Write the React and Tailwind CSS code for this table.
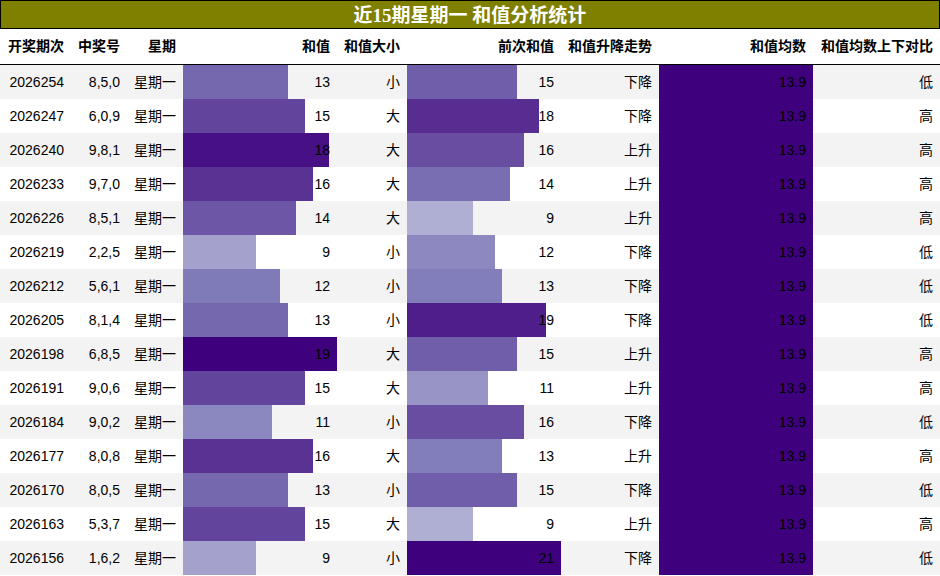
import React from 'react';

// --- Data ---
const rows = [
  ['2026254', '8,5,0', 13, '小', 15, '下降', '低'],
  ['2026247', '6,0,9', 15, '大', 18, '下降', '高'],
  ['2026240', '9,8,1', 18, '大', 16, '上升', '高'],
  ['2026233', '9,7,0', 16, '大', 14, '上升', '高'],
  ['2026226', '8,5,1', 14, '大', 9, '上升', '高'],
  ['2026219', '2,2,5', 9, '小', 12, '下降', '低'],
  ['2026212', '5,6,1', 12, '小', 13, '下降', '低'],
  ['2026205', '8,1,4', 13, '小', 19, '下降', '低'],
  ['2026198', '6,8,5', 19, '大', 15, '上升', '高'],
  ['2026191', '9,0,6', 15, '大', 11, '上升', '高'],
  ['2026184', '9,0,2', 11, '小', 16, '下降', '低'],
  ['2026177', '8,0,8', 16, '大', 13, '上升', '高'],
  ['2026170', '8,0,5', 13, '小', 15, '下降', '低'],
  ['2026163', '5,3,7', 15, '大', 9, '上升', '高'],
  ['2026156', '1,6,2', 9, '小', 21, '下降', '低'],
];

const AVG = 13.9;

// Purples colour scale (colorbrewer 9 steps)
const PURPLES = [
  [252, 251, 253], [239, 237, 245], [218, 218, 235], [188, 189, 220],
  [158, 154, 200], [128, 125, 186], [106, 81, 163], [84, 39, 143], [63, 0, 125],
];

const purple = (t) => {
  const x = Math.max(0, Math.min(1, t)) * (PURPLES.length - 1);
  const i = Math.min(Math.floor(x), PURPLES.length - 2);
  const f = x - i;
  const c = PURPLES[i].map((v, k) => Math.round(v + (PURPLES[i + 1][k] - v) * f));
  return `rgb(${c[0]},${c[1]},${c[2]})`;
};

// --- Bar cell: bar width and colour taken from the value ---
const BarCell = ({ value, max, label }) => (
  <div className="relative w-[154px] h-full">
    <div
      className="absolute left-0 top-0 h-full"
      style={{ width: `${(value / max) * 100}%`, backgroundColor: purple(value / max) }}
    />
    <div className="relative h-full flex items-center justify-end pr-[7px]">{label ?? value}</div>
  </div>
);

const maxSum = Math.max(...rows.map((r) => r[2]));
const maxPrev = Math.max(...rows.map((r) => r[4]));

export default function App() {
  return (
    <div
      className="w-[940px] h-[576px] bg-white overflow-hidden text-[14px] text-black"
      style={{ fontFamily: '"Liberation Sans", "Noto Sans CJK SC", sans-serif' }}
    >
      {/* Title */}
      <div className="h-[29px] bg-[#808000] border border-black flex items-center justify-center">
        <span
          className="text-white font-bold text-[19px] leading-none pt-[1px]"
          style={{ fontFamily: '"Liberation Serif", "Noto Sans CJK SC", serif' }}
        >
          近15期星期一 和值分析统计
        </span>
      </div>

      {/* Header */}
      <div className="h-[36px] flex font-bold border-b border-black">
        <div className="w-[71px] flex items-center justify-end pr-[7px]">开奖期次</div>
        <div className="w-[56px] flex items-center justify-end pr-[7px]">中奖号</div>
        <div className="w-[56px] flex items-center justify-end pr-[7px]">星期</div>
        <div className="w-[154px] flex items-center justify-end pr-[7px]">和值</div>
        <div className="w-[70px] flex items-center justify-end pr-[7px]">和值大小</div>
        <div className="w-[154px] flex items-center justify-end pr-[7px]">前次和值</div>
        <div className="w-[98px] flex items-center justify-end pr-[7px]">和值升降走势</div>
        <div className="w-[154px] flex items-center justify-end pr-[7px]">和值均数</div>
        <div className="w-[127px] flex items-center justify-end pr-[7px]">和值均数上下对比</div>
      </div>

      {/* Rows */}
      {rows.map((r, i) => (
        <div key={r[0]} className={`h-[34px] flex ${i % 2 === 0 ? 'bg-[#f3f3f3]' : 'bg-white'}`}>
          <div className="w-[71px] flex items-center justify-end pr-[7px]">{r[0]}</div>
          <div className="w-[56px] flex items-center justify-end pr-[7px]">{r[1]}</div>
          <div className="w-[56px] flex items-center justify-end pr-[7px]">星期一</div>
          <BarCell value={r[2]} max={maxSum} />
          <div className="w-[70px] flex items-center justify-end pr-[7px]">{r[3]}</div>
          <BarCell value={r[4]} max={maxPrev} />
          <div className="w-[98px] flex items-center justify-end pr-[7px]">{r[5]}</div>
          <BarCell value={AVG} max={AVG} label="13.9" />
          <div className="w-[127px] flex items-center justify-end pr-[7px]">{r[6]}</div>
        </div>
      ))}
    </div>
  );
}
